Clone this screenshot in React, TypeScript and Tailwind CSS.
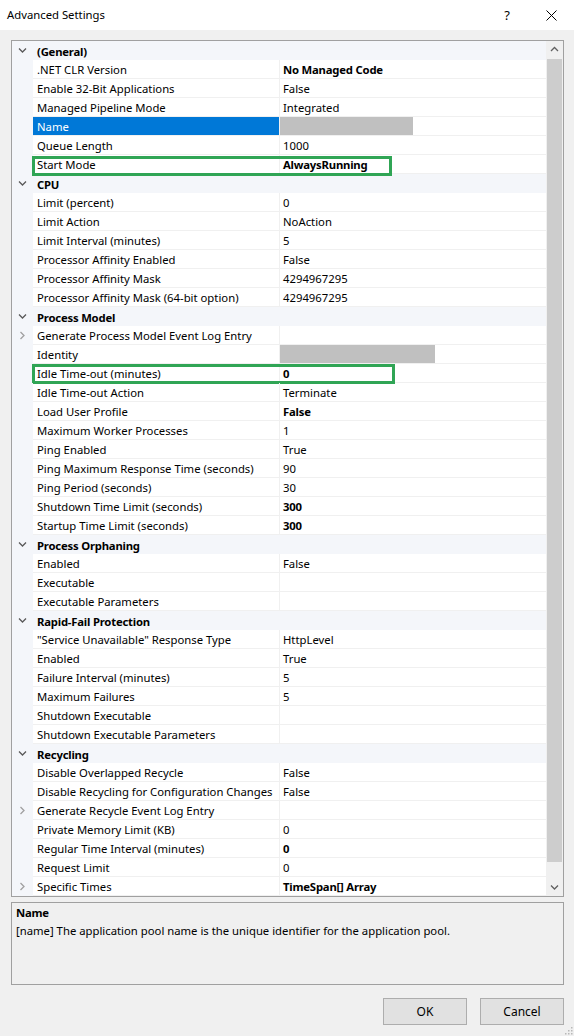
import React from 'react';

type Row =
  | { kind: 'cat'; name: string }
  | {
      kind: 'prop';
      name: string;
      value?: string;
      bold?: boolean;
      expand?: boolean;
      selected?: boolean;
      grayValue?: number;
      outline?: number;
      outlineTop?: number;
    };

const rows: Row[] = [
  { kind: 'cat', name: '(General)' },
  { kind: 'prop', name: '.NET CLR Version', value: 'No Managed Code', bold: true },
  { kind: 'prop', name: 'Enable 32-Bit Applications', value: 'False' },
  { kind: 'prop', name: 'Managed Pipeline Mode', value: 'Integrated' },
  { kind: 'prop', name: 'Name', selected: true, grayValue: 133 },
  { kind: 'prop', name: 'Queue Length', value: '1000' },
  { kind: 'prop', name: 'Start Mode', value: 'AlwaysRunning', bold: true, outline: 360, outlineTop: 1 },
  { kind: 'cat', name: 'CPU' },
  { kind: 'prop', name: 'Limit (percent)', value: '0' },
  { kind: 'prop', name: 'Limit Action', value: 'NoAction' },
  { kind: 'prop', name: 'Limit Interval (minutes)', value: '5' },
  { kind: 'prop', name: 'Processor Affinity Enabled', value: 'False' },
  { kind: 'prop', name: 'Processor Affinity Mask', value: '4294967295' },
  { kind: 'prop', name: 'Processor Affinity Mask (64-bit option)', value: '4294967295' },
  { kind: 'cat', name: 'Process Model' },
  { kind: 'prop', name: 'Generate Process Model Event Log Entry', expand: true },
  { kind: 'prop', name: 'Identity', grayValue: 155 },
  { kind: 'prop', name: 'Idle Time-out (minutes)', value: '0', bold: true, outline: 363, outlineTop: 0 },
  { kind: 'prop', name: 'Idle Time-out Action', value: 'Terminate' },
  { kind: 'prop', name: 'Load User Profile', value: 'False', bold: true },
  { kind: 'prop', name: 'Maximum Worker Processes', value: '1' },
  { kind: 'prop', name: 'Ping Enabled', value: 'True' },
  { kind: 'prop', name: 'Ping Maximum Response Time (seconds)', value: '90' },
  { kind: 'prop', name: 'Ping Period (seconds)', value: '30' },
  { kind: 'prop', name: 'Shutdown Time Limit (seconds)', value: '300', bold: true },
  { kind: 'prop', name: 'Startup Time Limit (seconds)', value: '300', bold: true },
  { kind: 'cat', name: 'Process Orphaning' },
  { kind: 'prop', name: 'Enabled', value: 'False' },
  { kind: 'prop', name: 'Executable' },
  { kind: 'prop', name: 'Executable Parameters' },
  { kind: 'cat', name: 'Rapid-Fail Protection' },
  { kind: 'prop', name: '"Service Unavailable" Response Type', value: 'HttpLevel' },
  { kind: 'prop', name: 'Enabled', value: 'True' },
  { kind: 'prop', name: 'Failure Interval (minutes)', value: '5' },
  { kind: 'prop', name: 'Maximum Failures', value: '5' },
  { kind: 'prop', name: 'Shutdown Executable' },
  { kind: 'prop', name: 'Shutdown Executable Parameters' },
  { kind: 'cat', name: 'Recycling' },
  { kind: 'prop', name: 'Disable Overlapped Recycle', value: 'False' },
  { kind: 'prop', name: 'Disable Recycling for Configuration Changes', value: 'False' },
  { kind: 'prop', name: 'Generate Recycle Event Log Entry', expand: true },
  { kind: 'prop', name: 'Private Memory Limit (KB)', value: '0' },
  { kind: 'prop', name: 'Regular Time Interval (minutes)', value: '0', bold: true },
  { kind: 'prop', name: 'Request Limit', value: '0' },
  { kind: 'prop', name: 'Specific Times', value: 'TimeSpan[] Array', bold: true, expand: true },
];

const Chevron: React.FC<{ dir: 'down' | 'right' | 'up'; color?: string }> = ({ dir, color = '#595959' }) => {
  const d =
    dir === 'down' ? 'M1 2.5 L4.5 6 L8 2.5' : dir === 'up' ? 'M1 6 L4.5 2.5 L8 6' : 'M2.5 1 L6 4.5 L2.5 8';
  return (
    <svg width="9" height="9" viewBox="0 0 9 9">
      <path d={d} fill="none" stroke={color} strokeWidth="1.3" />
    </svg>
  );
};

const GridRow: React.FC<{ row: Row }> = ({ row }) => {
  if (row.kind === 'cat') {
    return (
      <div className="flex h-[19px] bg-[#f4f6fa]">
        <div className="flex w-[21px] shrink-0 items-center justify-center">
          <Chevron dir="down" />
        </div>
        <div className="flex items-center whitespace-nowrap pl-[4px] pt-[2px] font-bold tracking-[-0.2px]">
          {row.name}
        </div>
      </div>
    );
  }
  return (
    <div className="relative flex h-[19px]">
      <div className="flex w-[21px] shrink-0 items-center justify-center bg-[#f4f6fa]">
        {row.expand && <Chevron dir="right" color="#a0a0a0" />}
      </div>
      <div
        className={`flex w-[246px] shrink-0 items-center whitespace-nowrap border-b border-[#f0f0f0] pl-[4px] pt-[2px] ${
          row.selected ? 'bg-[#0078d7] text-white' : ''
        }`}
      >
        {row.name}
      </div>
      <div className="flex flex-1 border-b border-l border-[#f0f0f0]">
        {row.grayValue ? (
          <div className="h-full bg-[#c0c0c0]" style={{ width: row.grayValue }} />
        ) : (
          <div
            className={`flex items-center whitespace-nowrap pl-[3px] pt-[2px] ${
              row.bold ? 'font-bold tracking-[-0.2px]' : ''
            }`}
          >
            {row.value}
          </div>
        )}
      </div>
      {row.outline && (
        <div
          className="absolute left-[20px] h-[20px] border-[3px] border-[#30a555]"
          style={{ width: row.outline, top: row.outlineTop }}
        />
      )}
    </div>
  );
};

export default function App() {
  return (
    <div
      className="relative flex h-[1036px] w-[574px] flex-col bg-[#f0f0f0] text-[11.3px] leading-none text-black"
      style={{ fontFamily: '"Noto Sans", "Liberation Sans", sans-serif' }}
    >
      {/* title bar */}
      <div className="flex h-[30px] items-center bg-white pl-[7px]">
        <span className="flex-1">Advanced Settings</span>
        <span className="w-[42px] text-center text-[13px]">?</span>
        <span className="flex w-[46px] items-center justify-center">
          <svg width="11" height="11" viewBox="0 0 11 11">
            <path d="M0.5 0.5 L10.5 10.5 M10.5 0.5 L0.5 10.5" stroke="#000" strokeWidth="1" />
          </svg>
        </span>
      </div>

      {/* property grid */}
      <div className="ml-[11px] mt-[10px] flex w-[553px] border border-[#a0a0a0] bg-white">
        <div className="w-[534px]">
          {rows.map((r, i) => (
            <GridRow key={i} row={r} />
          ))}
        </div>
        <div className="flex w-[17px] flex-col bg-[#f0f0f0]">
          <div className="flex h-[17px] items-center justify-center">
            <Chevron dir="up" color="#606060" />
          </div>
          <div className="flex-1 pt-[1px] pb-[17px]">
            <div className="mx-[1px] h-full bg-[#cdcdcd]" />
          </div>
          <div className="flex h-[17px] items-center justify-center">
            <Chevron dir="down" color="#606060" />
          </div>
        </div>
      </div>

      {/* description */}
      <div className="ml-[11px] mt-[5px] h-[83px] w-[553px] border border-[#a0a0a0] px-[4px] pt-[2px]">
        <div className="font-bold leading-[16px] tracking-[-0.2px]">Name</div>
        <div className="mt-[2px] leading-[16px]">
          [name] The application pool name is the unique identifier for the application pool.
        </div>
      </div>

      {/* buttons */}
      <div className="mt-[13px] flex justify-end gap-[13px] pr-[10px]">
        <button className="h-[27px] w-[84px] border border-[#adadad] bg-[#e1e1e1] text-[12px]">OK</button>
        <button className="h-[27px] w-[84px] border border-[#adadad] bg-[#e1e1e1] text-[12px]">Cancel</button>
      </div>

      {/* resize grip */}
      <svg className="absolute bottom-[1px] right-[1px]" width="10" height="10" viewBox="0 0 10 10">
        {[
          [8, 2],
          [8, 5],
          [5, 5],
          [8, 8],
          [5, 8],
          [2, 8],
        ].map(([x, y], i) => (
          <rect key={i} x={x} y={y} width="1.5" height="1.5" fill="#b8b8b8" />
        ))}
      </svg>
    </div>
  );
}
